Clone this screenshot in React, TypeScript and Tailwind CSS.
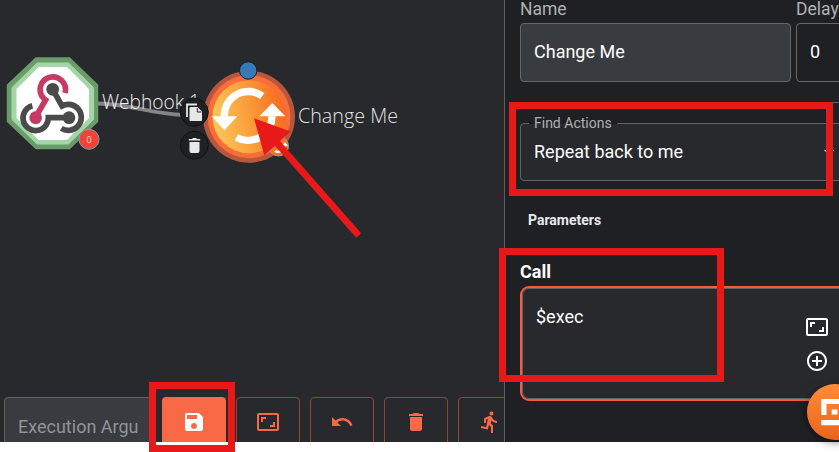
import type { ReactNode } from "react";
import {
  MdAddCircleOutline,
  MdArrowDropDown,
  MdAspectRatio,
  MdDelete,
  MdDirectionsRun,
  MdSave,
  MdUndo,
} from "react-icons/md";

function WebhookNode() {
  return (
    <g>
      <polygon points="36,58 69.500,58 97.500,85 97.500,121.500 69.500,148.500 36,148.500 7.500,121.500 7.500,85" fill="#6a9c69" stroke="#6a9c69" strokeWidth="1.500" strokeLinejoin="round" />
      <polygon points="37,63 68.500,63 93.500,87.500 93.500,119.500 68.500,144 37,144 12,119.500 12,87.500" fill="#a5d6a7" stroke="#a5d6a7" strokeWidth="1" strokeLinejoin="round" />
      <polygon points="38.500,67 67,67 89,89 89,118 67,140 38.500,140 16.500,118 16.500,89" fill="#fff" />
      <g transform="translate(0 50) scale(.33333)" fill="none" strokeWidth="17">
        <path d="M195 129A38 38 0 1 0 131 145L137 150L107 201" stroke="#c73a63" />
        <path d="M158 118L186 168A39 39 0 1 1 184 235" stroke="#4a4a4a" />
        <path d="M207 203H145A38 38 0 1 1 97 167" stroke="#4a4a4a" />
        <circle cx="158" cy="118" r="19" fill="#4a4a4a" stroke="none" />
        <circle cx="107" cy="203" r="19" fill="#c73a63" stroke="none" />
        <circle cx="207" cy="203" r="19" fill="#4a4a4a" stroke="none" />
      </g>
    </g>
  );
}

function WorkflowGraph() {
  return (
    <svg className="block h-[396px] w-[504px] font-['Open_Sans',sans-serif]" viewBox="0 0 504 396">
      <defs>
        <linearGradient id="repeat" x1="0" y1=".6" x2="1" y2=".4">
          <stop offset="0" stopColor="#fbc957" />
          <stop offset=".5" stopColor="#fa9d3b" />
          <stop offset="1" stopColor="#f86a1d" />
        </linearGradient>
      </defs>
      <path d="M98 103.500C132 104 148 113.500 184 115" stroke="#858585" strokeWidth="3.800" fill="none" />
      <WebhookNode />
      <circle cx="89" cy="139.300" r="10" fill="#f44336" stroke="#75a5b0" strokeWidth="1" />
      <text x="89" y="142.600" textAnchor="middle" fontSize="9" fill="#ffd9d4">0</text>
      <text x="102" y="108.500" textLength="98" lengthAdjust="spacingAndGlyphs" fontSize="20" fontWeight="300" fill="#f0f0f0">Webhook 1</text>

      <circle cx="249" cy="116.700" r="46" fill="#b9573d" />
      <circle cx="249" cy="116.700" r="41.500" fill="#fb6d38" />
      <circle cx="249" cy="116.700" r="36.500" fill="url(#repeat)" />
      <g transform="translate(190 55) scale(.33333)">
        <path d="M217 123A72 72 0 0 0 103 185M246 184A72 72 0 0 1 139 247" stroke="#fff" strokeWidth="22" fill="none" />
        <path d="M65 184H142L103 226ZM208 184H286L247 144Z" fill="#fff" />
      </g>
      <circle cx="278.500" cy="146" r="10" fill="#fa7029" stroke="#8ca095" />
      <path d="M273 144A6 6 0 0 1 280 140M284 146A6 6 0 0 1 275 151" stroke="#fff" strokeWidth="2.200" fill="none" />
      <path d="M281.500 146L285 142L288 146Z" fill="#fff" />
      <circle cx="248.200" cy="70.500" r="8.700" fill="#377ab8" stroke="#15202b" />

      <circle cx="194.300" cy="112.300" r="14" fill="#1f2023" stroke="#111214" />
      <path d="M187 117V104.500H197" stroke="#e8e8e8" strokeWidth="1.800" fill="none" />
      <path d="M191 107H197.500L202 111.500V120Q202 121 201 121H190.500Q189.500 121 189.500 120V108Q189.500 107 191 107Z" fill="#e8e8e8" />
      <path d="M197.300 108.200V112H201.200" fill="none" stroke="#1f2023" strokeWidth="1" />
      <circle cx="194.300" cy="145.200" r="14" fill="#1f2023" stroke="#111214" />
      <path d="M188.800 139H192L193 138H196L197 139H200.200V140.500H188.800ZM189.500 142H199.500V151Q199.500 153 197.500 153H191.500Q189.500 153 189.500 151Z" fill="#e8e8e8" />
      <text x="298" y="122.500" textLength="100" lengthAdjust="spacingAndGlyphs" fontSize="20" fontWeight="300" fill="#e2e2e2">Change Me</text>
      <path d="M254 118.300L290.600 131.500L280 141.100L361.200 233.200L356.200 237.800L275 145.700L264.300 155.300Z" fill="#e81919" />
    </svg>
  );
}

function ToolButton({ children }: { children: ReactNode }) {
  return (
    <button className="flex h-[64px] w-[64px] shrink-0 items-start justify-center rounded-[4px] border border-[#914734] pt-[12px] text-[24px] text-[#f96946]">
      {children}
    </button>
  );
}

function Workspace() {
  return (
    <main className="flex w-[504px] shrink-0 flex-col overflow-hidden bg-[#27292d]">
      <WorkflowGraph />
      <div className="flex h-[46px] items-start gap-[10px] overflow-hidden pt-px pl-[4px]">
        <div className="h-[64px] w-[148px] shrink-0 overflow-hidden rounded-[4px] border border-[#606265] bg-[#383b40] pt-[17px] pl-[13px] text-[18px] leading-[24px] whitespace-nowrap text-[#929497]">
          Execution Argu
        </div>
        <button className="flex h-[64px] w-[64px] shrink-0 items-start justify-center rounded-[4px] bg-[#f96946] pt-[13px] text-[24px] text-white">
          <MdSave />
        </button>
        <ToolButton><MdAspectRatio /></ToolButton>
        <ToolButton><MdUndo /></ToolButton>
        <ToolButton><MdDelete /></ToolButton>
        <ToolButton><MdDirectionsRun /></ToolButton>
      </div>
    </main>
  );
}

function Inspector() {
  return (
    <aside className="flex w-[335px] shrink-0 flex-col overflow-hidden border-l border-[#5b5d60] bg-[#1f2023] pl-[15px] text-[18px] text-white">
      <div className="flex h-[102px] shrink-0 gap-[5px]">
        <label className="w-[271px] shrink-0 text-[#b0b1b3]">
          <span className="block h-[23px] text-[17.500px] leading-[18px]">Name</span>
          <span className="flex h-[59px] items-center rounded-[4px] border border-[#65676a] bg-[#383b40] pb-[2px] pl-[13px] text-white">Change Me</span>
        </label>
        <label className="w-[120px] shrink-0 text-[#b0b1b3]">
          <span className="block h-[23px] text-[17.500px] leading-[18px]">Delay</span>
          <span className="flex h-[59px] items-center rounded-[4px] border border-[#65676a] pb-[2px] pl-[13px] text-white">0</span>
        </label>
      </div>
      <hr className="w-[400px] shrink-0 border-[#606265]" />
      <fieldset className="mt-[13px] h-[65px] w-[331px] shrink-0 rounded-[4px] border border-[#606265] bg-[linear-gradient(#27292d,#27292d)] pr-[9px] pl-[8px]">
        <legend className="h-[14px] px-[5px] text-[14px] leading-[14px] text-[#b0b1b3]">Find Actions</legend>
        <div className="flex h-[43px] items-center justify-between pl-[5px]">
          <span>Repeat back to me</span>
          <MdArrowDropDown className="text-[24px]" />
        </div>
      </fieldset>
      <h2 className="mt-[30px] ml-[8px] shrink-0 text-[14px] leading-[18px] font-bold text-[#e7e9f2]">Parameters</h2>
      <h3 className="mt-[31px] h-[26px] shrink-0 text-[18px] leading-[24px] font-bold">Call</h3>
      <div className="h-[115px] w-[334px] shrink-0 rounded-[9px] border-2 border-[#f85a3e] bg-[#27292d]">
        <div className="flex h-full justify-between rounded-[7px] border border-[#606265] pt-[16px] pr-[22px] pl-[13px] leading-[24px]">
          <span>$exec</span>
          <div className="flex flex-col gap-[10px] pt-[10px] text-[24px]">
            <MdAspectRatio />
            <MdAddCircleOutline />
          </div>
        </div>
      </div>
    </aside>
  );
}

export default function App() {
  return (
    <div className="relative h-[452px] w-[839px] overflow-hidden bg-white font-[Roboto,sans-serif]">
      <div className="flex h-[442px]">
        <Workspace />
        <Inspector />
      </div>
      <button className="absolute top-[384px] left-[807px] h-[56px] w-[56px] rounded-full bg-gradient-to-b from-[#ff8b35] to-[#e9641d] shadow-[0_2px_8px_#0008]">
        <svg className="block h-[56px] w-[56px]" viewBox="0 0 56 56" fill="#fff">
          <path d="M14.300 15H42V20H19.500V31H14.300ZM14.300 36H42V41.200H14.300ZM24.700 25.500H30.500V30.500H24.700Z" />
        </svg>
      </button>
      <div className="absolute top-[102px] left-[508.500px] h-[94px] w-[324px] border-[7px] border-[#e81919]" />
      <div className="absolute top-[248px] left-[499px] h-[134px] w-[225px] border-[7px] border-[#e81919]" />
      <div className="absolute top-[382px] left-[149px] h-[70px] w-[86px] border-[7px] border-[#e81919]" />
    </div>
  );
}
